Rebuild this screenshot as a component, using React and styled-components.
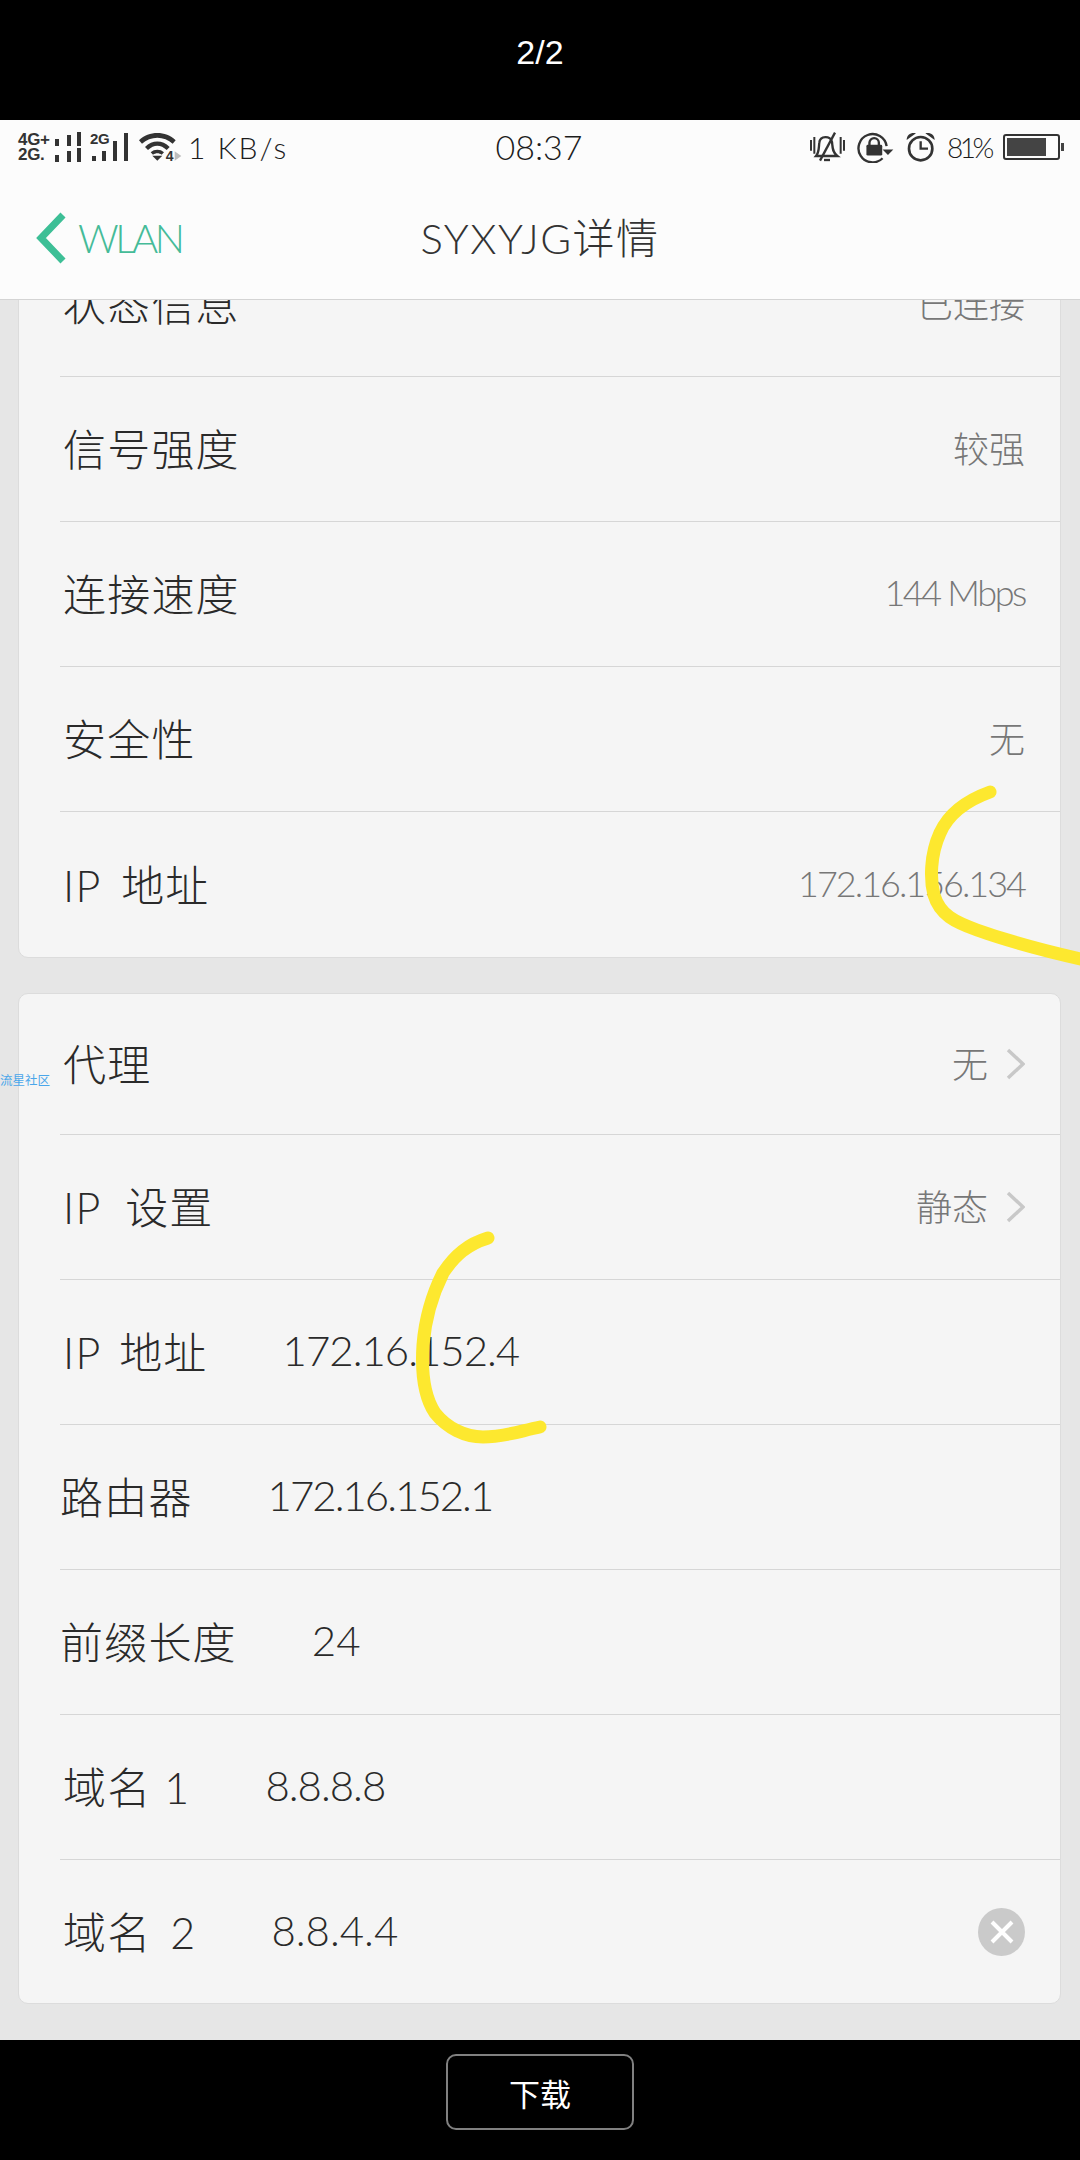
import React from "react";
import styled, { createGlobalStyle } from "styled-components";

const HAND = `Lato, "Noto Sans CJK SC", sans-serif`;

const Global = createGlobalStyle`
  html, body { margin: 0; padding: 0; background: #000; }
  * { box-sizing: border-box; }
`;

const Page = styled.div`
  position: relative;
  width: 1080px;
  height: 2160px;
  display: flex;
  flex-direction: column;
  overflow: hidden;
  background: #000;
  font-family: ${HAND};
`;

const BlackBar = styled.div`
  height: 120px;
  flex: none;
  background: #000;
  display: flex;
  align-items: ${(p) => (p.$bottom ? "flex-start" : "center")};
  justify-content: center;
  padding-top: ${(p) => (p.$bottom ? "14px" : "0")};
  padding-bottom: ${(p) => (p.$bottom ? "0" : "16px")};
`;

const Counter = styled.span`
  font-family: "Liberation Sans", sans-serif;
  color: #fff;
  font-size: 34px;
`;

const DownloadButton = styled.button`
  width: 188px;
  height: 76px;
  background: #000;
  border: 2px solid #808080;
  border-radius: 10px;
  color: #fff;
  font-family: "Noto Sans CJK SC", sans-serif;
  font-size: 31px;
  padding: 0;
`;

const Phone = styled.div`
  flex: 1;
  display: flex;
  flex-direction: column;
  background: #e6e6e6;
  min-height: 0;
`;

const Header = styled.header`
  flex: none;
  height: 180px;
  background: #fcfcfc;
  border-bottom: 1px solid #d4d4d4;
  display: flex;
  flex-direction: column;
  position: relative;
  z-index: 1;
`;

const StatusBar = styled.div`
  height: 56px;
  padding: 13px 16px 0 18px;
  display: flex;
  align-items: flex-start;
  justify-content: space-between;
  color: #222;
`;

const StatusGroup = styled.div`
  display: flex;
  align-items: center;
  width: ${(p) => p.$w}px;
  justify-content: ${(p) => (p.$end ? "flex-end" : "flex-start")};
  gap: ${(p) => p.$gap || 0}px;
  height: 28px;
`;

const StatusText = styled.span`
  font-size: 30px;
  font-weight: 300;
  line-height: 28px;
  letter-spacing: 2px;
  white-space: nowrap;
  color: #1c1c1c;
`;

const Battery81 = styled(StatusText)`
  width: 44px;
  font-size: 28px;
  letter-spacing: -3.5px;
`;

const Clock = styled(StatusText)`
  flex: 1;
  text-align: center;
  font-size: 34px;
  letter-spacing: 0;
`;

const SimStack = styled.div`
  display: flex;
  flex-direction: column;
  width: 34px;
  gap: 2px;
`;

const SimLabel = styled.span`
  font-family: "Liberation Sans", sans-serif;
  font-weight: 700;
  font-size: 17px;
  line-height: 13px;
  letter-spacing: -0.3px;
  display: block;
  white-space: nowrap;
  color: #333;
`;

const SimTwo = styled.div`
  position: relative;
  display: flex;
`;

const SimBadge = styled(SimLabel)`
  position: absolute;
  left: 0;
  top: 0;
  font-size: 15px;
`;

const NavBar = styled.div`
  flex: 1;
  position: relative;
  display: flex;
  align-items: center;
  justify-content: center;
  padding-bottom: 5px;
`;

const Back = styled.div`
  position: absolute;
  left: 36px;
  top: 36px;
  display: flex;
  align-items: center;
  gap: 12px;
  color: #45bb98;
  font-size: 40px;
  font-weight: 300;
  letter-spacing: -3.5px;
`;

const Title = styled.h1`
  margin: 0;
  font-size: 42px;
  font-weight: 300;
  color: #333;
  letter-spacing: 1.5px;
`;

const Scroll = styled.main`
  flex: 1;
  min-height: 0;
  overflow: hidden;
  padding: 0 19px 0 18px;
  display: flex;
  flex-direction: column;
  gap: 35px;
`;

const Card = styled.section`
  flex: none;
  margin-top: ${(p) => p.$offset || 0}px;
  background: #f5f5f5;
  border: 1px solid #dcdcdc;
  border-radius: 10px;
  padding-left: 41px;
`;

const Row = styled.div`
  height: ${(p) => p.$h || 145}px;
  display: flex;
  align-items: center;
  padding-right: 35px;
  gap: 75px;
  border-bottom: ${(p) => (p.$last ? "none" : "1px solid #d6d6d6")};
`;

const Label = styled.span`
  font-size: 43px;
  font-weight: 300;
  color: #2a2a2a;
  white-space: nowrap;
  letter-spacing: 1.2px;
  word-spacing: ${(p) => p.$ws || 0}px;
  padding-left: ${(p) => (p.$flush ? 0 : 3)}px;
  padding-bottom: 4px;
`;

const Input = styled.span`
  font-size: 42px;
  font-weight: 300;
  color: #2a2a2a;
  letter-spacing: ${(p) => p.$ls ?? -1.2}px;
  padding-bottom: 4px;
`;

const Trail = styled.div`
  margin-left: auto;
  display: flex;
  align-items: center;
  gap: 18px;
`;

const Value = styled.span`
  font-size: 36px;
  font-weight: 300;
  color: #777;
  white-space: nowrap;
  letter-spacing: ${(p) => p.$ls || 0}px;
  padding-bottom: 4px;
`;

const Clear = styled.span`
  width: 47px;
  height: 48px;
  border-radius: 50%;
  background: #cacaca;
  display: flex;
  align-items: center;
  justify-content: center;
`;

const Watermark = styled.span`
  position: absolute;
  left: 0;
  top: 1072px;
  font-family: "Noto Sans CJK SC", sans-serif;
  font-size: 12.5px;
  line-height: 16px;
  color: #4aa6ea;
`;

const Scribbles = styled.svg`
  position: absolute;
  inset: 0;
  width: 1080px;
  height: 2160px;
  pointer-events: none;
  z-index: 2;
`;

const Bars = () => (
  <svg width="38" height="30" viewBox="0 0 38 30" fill="#333">
    <rect x="3" y="7" width="4" height="7" />
    <rect x="15" y="3" width="4" height="11" />
    <rect x="25" y="0" width="4" height="14" />
    <rect x="3" y="23" width="4" height="7" />
    <rect x="15" y="19" width="4" height="11" />
    <rect x="25" y="16" width="4" height="14" />
  </svg>
);

const BigBars = () => (
  <svg width="49" height="30" viewBox="0 0 49 30" fill="#333">
    <rect x="2" y="24" width="4" height="5" />
    <rect x="12" y="19" width="4" height="10" />
    <rect x="23" y="9" width="4" height="20" />
    <rect x="34" y="1" width="4" height="28" />
  </svg>
);

const Wifi = () => (
  <svg width="49" height="28" viewBox="0 0 147 84">
    <path d="M0 22 C30 -7 80 -7 110 22 L101 32 C76 8 34 8 9 32 Z" fill="#333" />
    <path d="M18 42 C40 20 70 20 92 42 L83 51 C65 34 45 34 27 51 Z" fill="#333" />
    <path d="M35 58 C46 48 64 48 75 58 L68 65 C60 59 50 59 42 65 Z" fill="#333" />
    <path d="M40 68 H70 L55 83 Z" fill="#333" />
    <text x="80" y="83" fontFamily="Liberation Sans, sans-serif" fontWeight="700" fontSize="42" fill="#333">4</text>
    <path d="M107 55 L127 69 L107 83 Z" fill="#bdbdbd" />
  </svg>
);

const Bell = () => (
  <svg width="35" height="30" viewBox="0 0 105 90" fill="none" stroke="#333" strokeWidth="7">
    <path d="M3 24 V56 M13 15 V65 M92 15 V65 M102 24 V56" strokeWidth="6" />
    <path d="M18 72 C28 60 26 45 28 32 C30 10 62 10 66 30 C68 45 66 60 82 72 Z" />
    <path d="M75 2 L30 86" />
    <path d="M42 84 H60" />
  </svg>
);

const RotateLock = () => (
  <svg width="37" height="31" viewBox="0 0 110 92" fill="none" stroke="#333">
    <path d="M88 42 A42 42 0 1 0 76 78" strokeWidth="7" />
    <path d="M76 52 H108 L92 68 Z" fill="#333" stroke="none" />
    <rect x="28" y="38" width="47" height="32" rx="4" fill="#333" stroke="none" />
    <path d="M37 40 V32 A14 14 0 0 1 65 32 V40" strokeWidth="7" />
  </svg>
);

const Alarm = () => (
  <svg width="29" height="30" viewBox="0 0 87 90" fill="none" stroke="#333">
    <circle cx="44" cy="50" r="35" strokeWidth="8" />
    <path d="M44 28 V50 H66" strokeWidth="7" />
    <path d="M2 24 C2 8 16 0 30 4 Z M86 24 C86 8 72 0 58 4 Z" fill="#333" stroke="none" />
  </svg>
);

const Battery = () => (
  <svg width="61" height="26" viewBox="0 0 61 26" fill="none">
    <rect x="1" y="1" width="55" height="24" rx="2" stroke="#333" strokeWidth="2" />
    <rect x="4" y="4" width="39" height="18" fill="#444" />
    <rect x="58" y="9" width="3" height="8" fill="#444" />
  </svg>
);

const Chevron = () => (
  <svg width="19" height="32" viewBox="0 0 19 32" fill="none" stroke="#c8c8c8" strokeWidth="3.5">
    <path d="M2 2 L17 16 L2 30" />
  </svg>
);

const BackArrow = () => (
  <svg width="30" height="52" viewBox="0 0 30 52" fill="none" stroke="#3dbf96" strokeWidth="7">
    <path d="M27 3 L5 26 L27 49" />
  </svg>
);

const infoRows = [
  ["状态信息", "已连接", 0, 0],
  ["信号强度", "较强", 0, 0],
  ["连接速度", "144 Mbps", 0, -2.4],
  ["安全性", "无", 0, 0],
  ["IP 地址", "172.16.156.134", 8, -2],
];

const editRows = [
  ["IP 地址", "172.16.152.4", 6, false, -1],
  ["路由器", "172.16.152.1", 0, true, -2],
  ["前缀长度", "24", 0, true, 0],
  ["域名 1", "8.8.8.8", 0, false, -1],
];

export default function App() {
  return (
    <Page>
      <Global />
      <BlackBar>
        <Counter>2/2</Counter>
      </BlackBar>
      <Phone>
        <Header>
          <StatusBar>
            <StatusGroup $w={316}>
              <SimStack>
                <SimLabel>4G+</SimLabel>
                <SimLabel>2G.</SimLabel>
              </SimStack>
              <Bars />
              <SimTwo>
                <SimBadge>2G</SimBadge>
                <BigBars />
              </SimTwo>
              <Wifi />
              <StatusText>1 KB/s</StatusText>
            </StatusGroup>
            <Clock>08:37</Clock>
            <StatusGroup $w={320} $end $gap={12}>
              <Bell />
              <RotateLock />
              <Alarm />
              <Battery81>81%</Battery81>
              <Battery />
            </StatusGroup>
          </StatusBar>
          <NavBar>
            <Back>
              <BackArrow />
              WLAN
            </Back>
            <Title>SYXYJG详情</Title>
          </NavBar>
        </Header>
        <Scroll>
          <Card $offset={-69}>
            {infoRows.map(([k, v, ws, ls], i) => (
              <Row key={k} $last={i === infoRows.length - 1}>
                <Label $ws={ws}>{k}</Label>
                <Trail>
                  <Value $ls={ls}>{v}</Value>
                </Trail>
              </Row>
            ))}
          </Card>
          <Card>
            <Row $h={141}>
              <Label>代理</Label>
              <Trail>
                <Value>无</Value>
                <Chevron />
              </Trail>
            </Row>
            <Row>
              <Label $ws={12}>IP 设置</Label>
              <Trail>
                <Value>静态</Value>
                <Chevron />
              </Trail>
            </Row>
            {editRows.map(([k, v, ws, flush, ls]) => (
              <Row key={k}>
                <Label $flush={flush} $ws={ws}>{k}</Label>
                <Input $ls={ls}>{v}</Input>
              </Row>
            ))}
            <Row $last $h={143}>
              <Label $ws={6}>域名 2</Label>
              <Input $ls={0}>8.8.4.4</Input>
              <Trail>
                <Clear>
                  <svg width="24" height="24" viewBox="0 0 24 24" stroke="#fff" strokeWidth="4">
                    <path d="M2 2 L22 22 M22 2 L2 22" />
                  </svg>
                </Clear>
              </Trail>
            </Row>
          </Card>
        </Scroll>
      </Phone>
      <BlackBar $bottom>
        <DownloadButton>下载</DownloadButton>
      </BlackBar>
      <Watermark>流星社区</Watermark>
      <Scribbles viewBox="0 0 1080 2160" fill="none" stroke="#fde82f" strokeWidth="13" strokeLinecap="round" strokeLinejoin="round">
        <path d="M990 792 C965 801 948 815 940 833 C930 855 930 880 934 895 C940 915 955 922 977 930 C1005 940 1040 950 1085 960" />
        <path d="M488 1238 C468 1244 455 1255 443 1273 C432 1295 425 1320 423 1345 C421 1375 425 1398 435 1413 C447 1428 465 1437 483 1437 C505 1437 520 1431 540 1427" />
      </Scribbles>
    </Page>
  );
}
